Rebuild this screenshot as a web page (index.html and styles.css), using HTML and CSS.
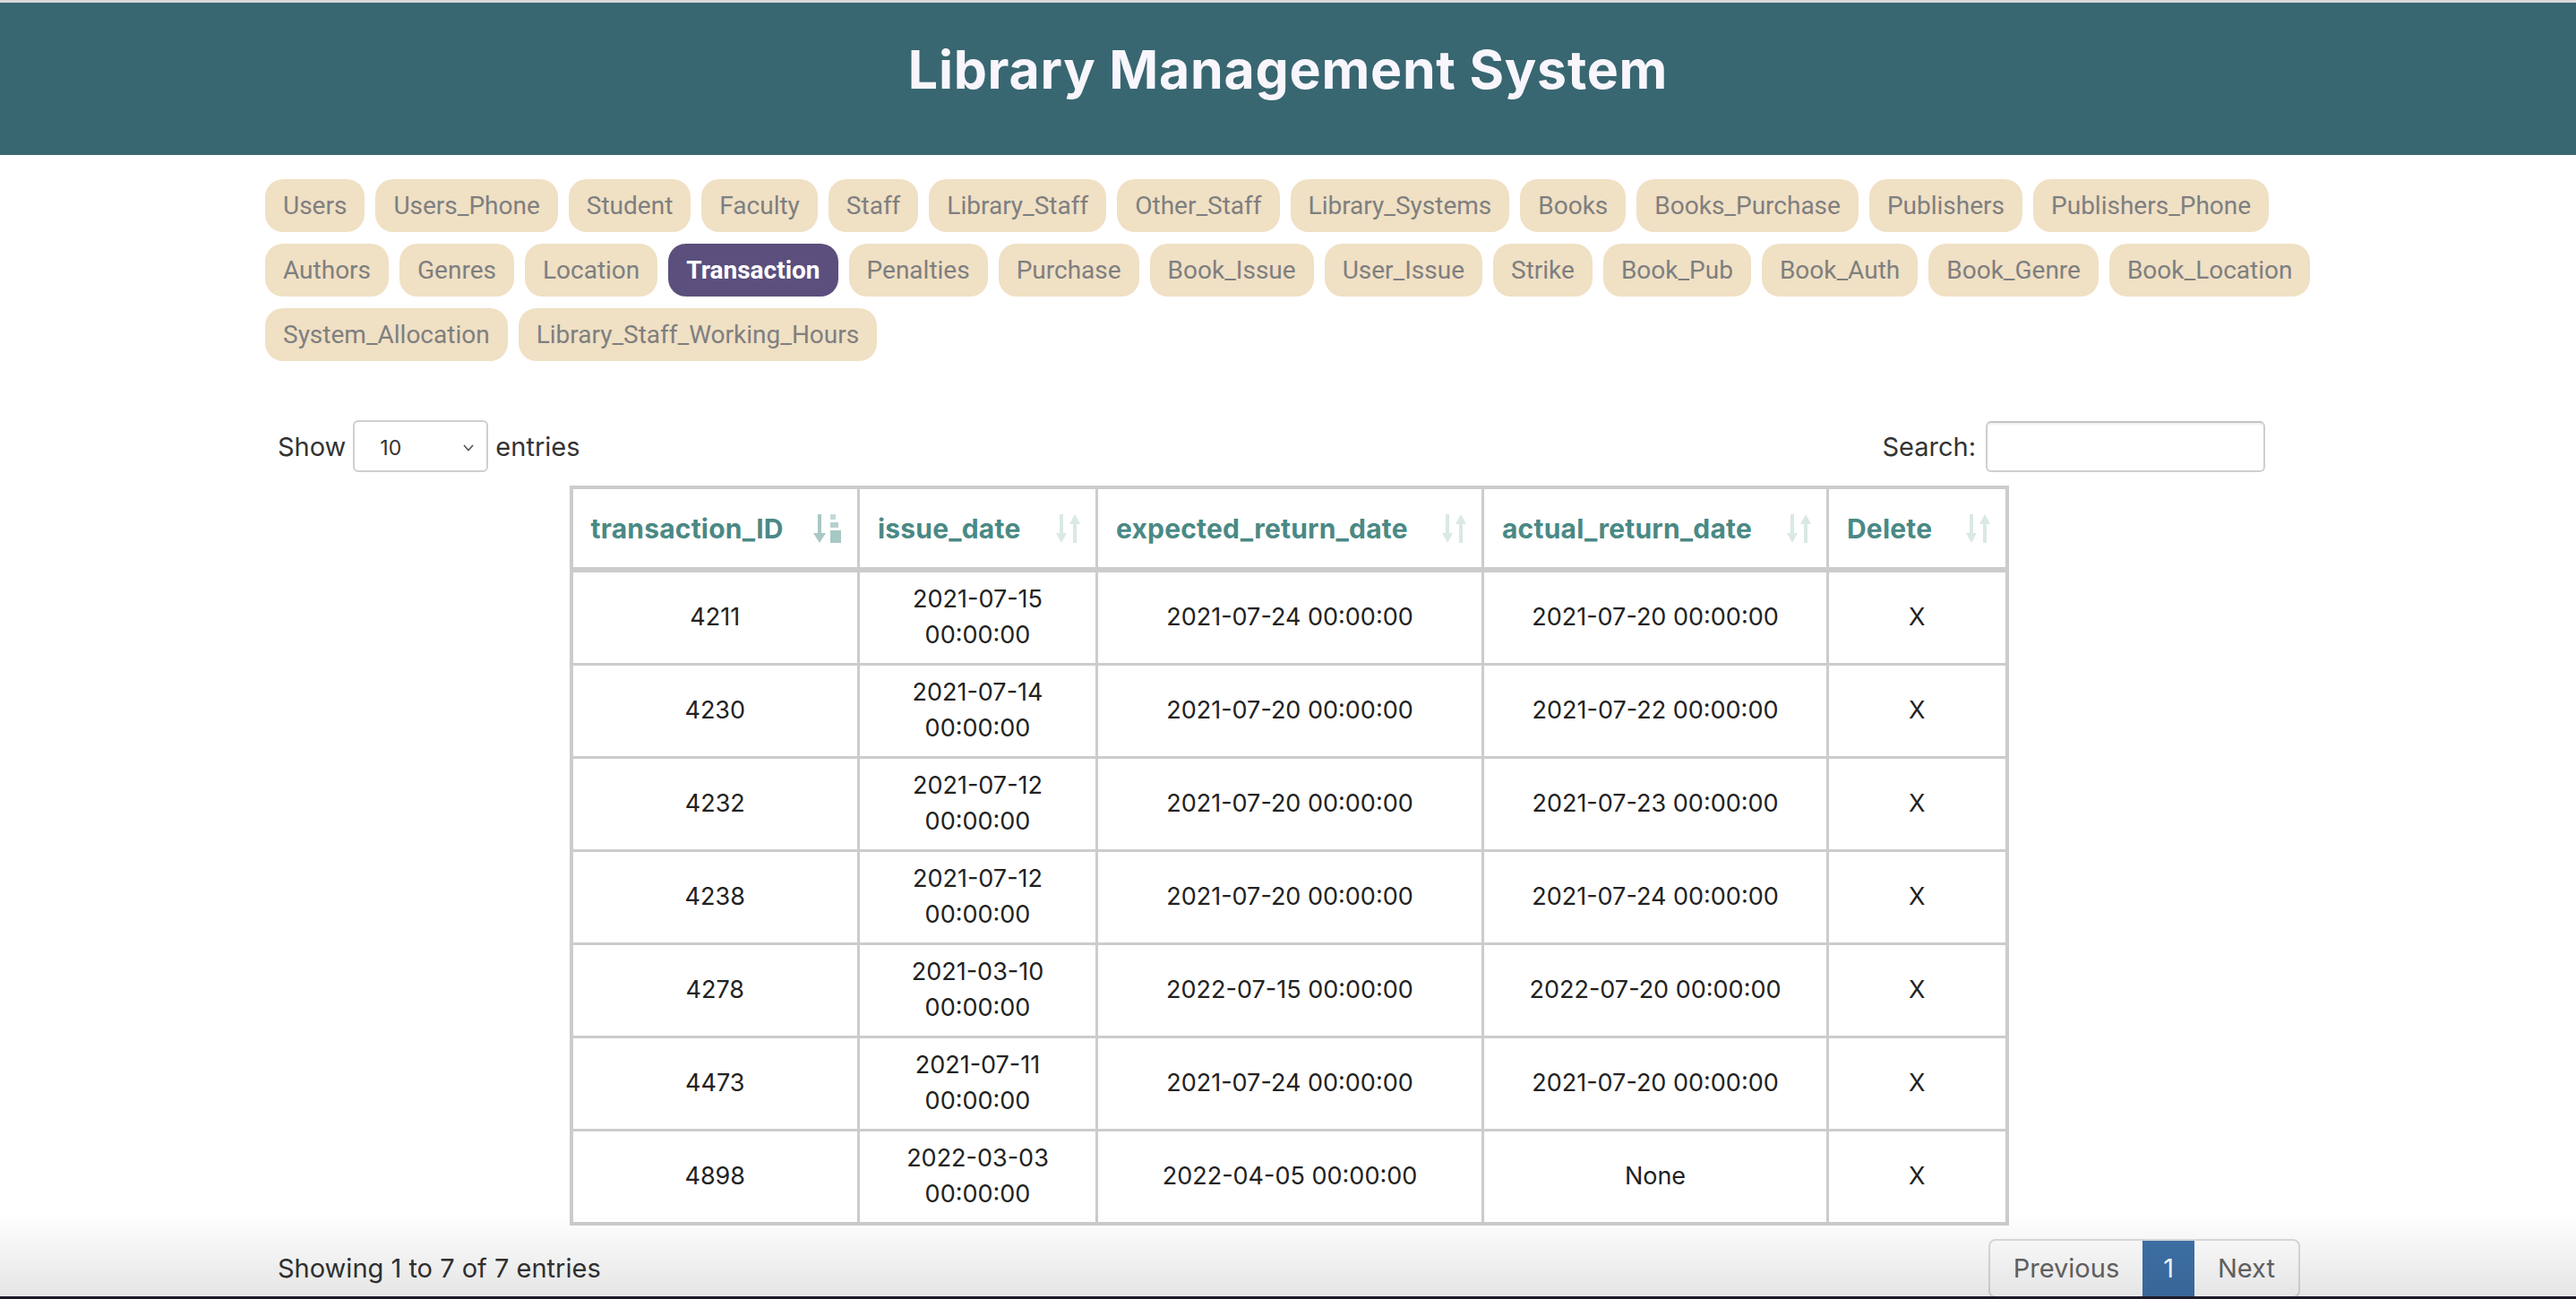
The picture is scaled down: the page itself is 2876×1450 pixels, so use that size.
FILE: index.html
```html
<!DOCTYPE html>
<html lang="en">
<head>
<meta charset="utf-8">
<title>Library Management System</title>
<link rel="stylesheet" href="styles.css">
</head>
<body>
<header class="app-header">
  <h1 class="app-title">Library Management System</h1>
</header>

<nav class="tabs">
  <a class="tab">Users</a>
  <a class="tab">Users_Phone</a>
  <a class="tab">Student</a>
  <a class="tab">Faculty</a>
  <a class="tab">Staff</a>
  <a class="tab">Library_Staff</a>
  <a class="tab">Other_Staff</a>
  <a class="tab">Library_Systems</a>
  <a class="tab">Books</a>
  <a class="tab">Books_Purchase</a>
  <a class="tab">Publishers</a>
  <a class="tab">Publishers_Phone</a>
  <a class="tab">Authors</a>
  <a class="tab">Genres</a>
  <a class="tab">Location</a>
  <a class="tab active">Transaction</a>
  <a class="tab">Penalties</a>
  <a class="tab">Purchase</a>
  <a class="tab">Book_Issue</a>
  <a class="tab">User_Issue</a>
  <a class="tab">Strike</a>
  <a class="tab">Book_Pub</a>
  <a class="tab">Book_Auth</a>
  <a class="tab">Book_Genre</a>
  <a class="tab">Book_Location</a>
  <a class="tab">System_Allocation</a>
  <a class="tab">Library_Staff_Working_Hours</a>
</nav>

<main class="dt">
  <div class="dt-top">
    <div class="length">
      <span>Show</span>
      <span class="select"><span>10</span>
        <svg class="chev" width="12" height="8" viewBox="0 0 12 8"><polyline points="1,1 6,6.5 11,1" fill="none" stroke="#555" stroke-width="1.6"/></svg>
      </span>
      <span>entries</span>
    </div>
    <div class="filter">
      <span>Search:</span>
      <span class="search-box"></span>
    </div>
  </div>

  <table class="data">
    <colgroup>
      <col class="w1"><col class="w2"><col class="w3"><col class="w4"><col class="w5">
    </colgroup>
    <thead>
      <tr>
        <th><div class="th-in"><span>transaction_ID</span>
          <svg class="sort" width="36" height="34" viewBox="0 0 36 34">
            <line x1="8" y1="1" x2="8" y2="24" stroke="#a8c8c5" stroke-width="4"/>
            <polygon points="1,22 15,22 8,33" fill="#a8c8c5"/>
            <rect x="20" y="1" width="6" height="6" fill="#c3d9d7"/>
            <rect x="20" y="10" width="9" height="6" fill="#b6d1ce"/>
            <rect x="20" y="19" width="12" height="14" fill="#a8c8c5"/>
          </svg></div></th>
        <th><div class="th-in"><span>issue_date</span>
          <svg class="sort" width="32" height="34" viewBox="0 0 32 34">
            <line x1="8" y1="1" x2="8" y2="24" stroke="#dae8e6" stroke-width="4"/>
            <polygon points="2,22 14,22 8,33" fill="#dae8e6"/>
            <line x1="23" y1="10" x2="23" y2="33" stroke="#dae8e6" stroke-width="4"/>
            <polygon points="17,12 29,12 23,1" fill="#dae8e6"/>
          </svg></div></th>
        <th><div class="th-in"><span>expected_return_date</span>
          <svg class="sort" width="32" height="34" viewBox="0 0 32 34">
            <line x1="8" y1="1" x2="8" y2="24" stroke="#dae8e6" stroke-width="4"/>
            <polygon points="2,22 14,22 8,33" fill="#dae8e6"/>
            <line x1="23" y1="10" x2="23" y2="33" stroke="#dae8e6" stroke-width="4"/>
            <polygon points="17,12 29,12 23,1" fill="#dae8e6"/>
          </svg></div></th>
        <th><div class="th-in"><span>actual_return_date</span>
          <svg class="sort" width="32" height="34" viewBox="0 0 32 34">
            <line x1="8" y1="1" x2="8" y2="24" stroke="#dae8e6" stroke-width="4"/>
            <polygon points="2,22 14,22 8,33" fill="#dae8e6"/>
            <line x1="23" y1="10" x2="23" y2="33" stroke="#dae8e6" stroke-width="4"/>
            <polygon points="17,12 29,12 23,1" fill="#dae8e6"/>
          </svg></div></th>
        <th><div class="th-in"><span>Delete</span>
          <svg class="sort" width="32" height="34" viewBox="0 0 32 34">
            <line x1="8" y1="1" x2="8" y2="24" stroke="#dae8e6" stroke-width="4"/>
            <polygon points="2,22 14,22 8,33" fill="#dae8e6"/>
            <line x1="23" y1="10" x2="23" y2="33" stroke="#dae8e6" stroke-width="4"/>
            <polygon points="17,12 29,12 23,1" fill="#dae8e6"/>
          </svg></div></th>
      </tr>
    </thead>
    <tbody>
      <tr><td>4211</td><td>2021-07-15 00:00:00</td><td>2021-07-24 00:00:00</td><td>2021-07-20 00:00:00</td><td>X</td></tr>
      <tr><td>4230</td><td>2021-07-14 00:00:00</td><td>2021-07-20 00:00:00</td><td>2021-07-22 00:00:00</td><td>X</td></tr>
      <tr><td>4232</td><td>2021-07-12 00:00:00</td><td>2021-07-20 00:00:00</td><td>2021-07-23 00:00:00</td><td>X</td></tr>
      <tr><td>4238</td><td>2021-07-12 00:00:00</td><td>2021-07-20 00:00:00</td><td>2021-07-24 00:00:00</td><td>X</td></tr>
      <tr><td>4278</td><td>2021-03-10 00:00:00</td><td>2022-07-15 00:00:00</td><td>2022-07-20 00:00:00</td><td>X</td></tr>
      <tr><td>4473</td><td>2021-07-11 00:00:00</td><td>2021-07-24 00:00:00</td><td>2021-07-20 00:00:00</td><td>X</td></tr>
      <tr><td>4898</td><td>2022-03-03 00:00:00</td><td>2022-04-05 00:00:00</td><td>None</td><td>X</td></tr>
    </tbody>
  </table>

  <div class="dt-bottom">
    <div class="info">Showing 1 to 7 of 7 entries</div>
    <div class="pager">
      <span class="pbtn">Previous</span>
      <span class="pbtn current">1</span>
      <span class="pbtn">Next</span>
    </div>
  </div>
</main>

<div class="shade"></div>
</body>
</html>
```
FILE: styles.css
```css
html, body {
  margin: 0;
  padding: 0;
  background: #ffffff;
}

body {
  font-family: Inter, "Open Sans", Arial, sans-serif;
  color: #2b2b2b;
  overflow: hidden;
}

.app-header {
  border-top: 3px solid #d9d9d9;
  background: #386771;
  padding: 39px 0 59px;
}

.app-title {
  margin: 0;
  font-size: 59px;
  line-height: 72px;
  font-weight: 700;
  color: #f8f6fc;
  text-align: center;
  letter-spacing: 0.75px;
}

.tabs {
  display: flex;
  flex-wrap: wrap;
  gap: 13px 12px;
  margin: 27px 296px 0;
}

.tab {
  display: block;
  background: #f0e0c4;
  color: #7e7f80;
  font-family: Roboto, Arial, sans-serif;
  font-size: 28px;
  line-height: 59px;
  padding: 0 20px;
  border-radius: 20px;
}

.tab.active {
  background: #5b4f7d;
  color: #ffffff;
  font-weight: 700;
}

.dt {
  margin: 66px 308px 0 310px;
}

.dt-top {
  display: flex;
  justify-content: space-between;
  align-items: center;
  height: 58px;
  font-size: 29px;
  color: #333;
}

.length {
  display: flex;
  align-items: center;
  gap: 8px;
}

.select {
  box-sizing: border-box;
  width: 151px;
  height: 58px;
  border: 2px solid #cfcfcf;
  border-radius: 6px;
  display: flex;
  align-items: center;
  justify-content: space-between;
  padding: 4px 14px 0 28px;
  font-size: 23px;
  color: #333;
}

.filter {
  display: flex;
  align-items: center;
  gap: 11px;
  margin-right: 39px;
}

.search-box {
  box-sizing: border-box;
  width: 312px;
  height: 57px;
  border: 2px solid #cfcfcf;
  border-top-color: #c4c4c4;
  border-radius: 6px;
  box-shadow: inset 0 2px 2px rgba(0, 0, 0, 0.06);
}

.data {
  margin: 15px auto 0;
  border-collapse: collapse;
  table-layout: fixed;
  width: 1603px;
  border: 4px solid #cccccc;
}

.w1 { width: 321px; }
.w2 { width: 266px; }
.w3 { width: 431px; }
.w4 { width: 385px; }
.w5 { width: 200px; }

.data th {
  border: 3px solid #cccccc;
  border-bottom-width: 6px;
  height: 87px;
  padding: 0 14px 0 20px;
  text-align: left;
  color: #4a8985;
  font-weight: 700;
  font-size: 30px;
  letter-spacing: 0.2px;
}

.th-in {
  display: flex;
  align-items: center;
  justify-content: space-between;
}

.sort {
  flex: none;
  display: block;
}

.data td {
  border: 3px solid #cccccc;
  padding: 10px 20px 11px;
  text-align: center;
  font-size: 27px;
  line-height: 40px;
  color: #222;
}

.dt-bottom {
  display: flex;
  justify-content: space-between;
  align-items: center;
  margin-top: 15px;
}

.info {
  font-size: 29px;
  color: #333;
  padding-bottom: 2px;
}

.pager {
  display: flex;
  border: 2px solid #dddddd;
  border-radius: 8px;
  overflow: hidden;
  font-size: 29px;
}

.pbtn {
  padding: 11px 26px;
  line-height: 40px;
  color: #666;
}

.pbtn.current {
  background: #3f72a9;
  color: #ffffff;
  padding: 11px 23px;
}

.shade {
  position: fixed;
  left: 0;
  right: 0;
  bottom: 0;
  height: 92px;
  background: linear-gradient(to bottom, rgba(0, 0, 0, 0), rgba(0, 0, 0, 0.1));
  border-bottom: 3px solid #1d1828;
  pointer-events: none;
}
```
